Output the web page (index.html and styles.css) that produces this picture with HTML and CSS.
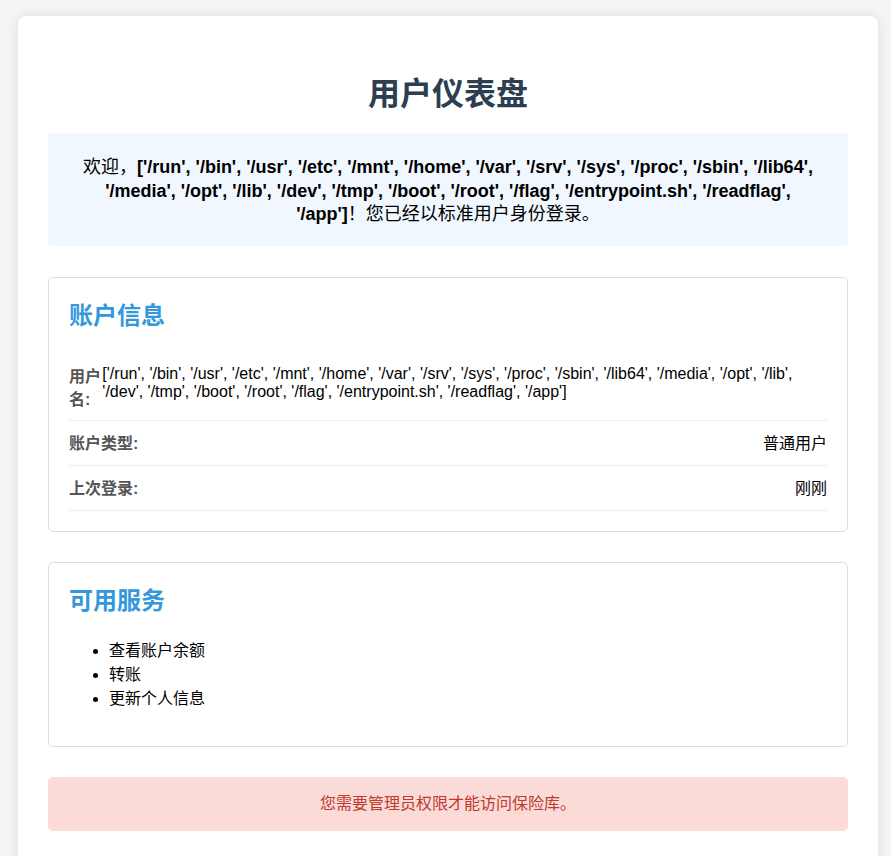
FILE: index.html
```html
<!DOCTYPE html>
<html lang="zh-CN">
<head>
<meta charset="UTF-8">
<title>用户仪表盘</title>
<link rel="stylesheet" href="styles.css">
</head>
<body>
<div class="container">
  <h1 class="title">用户仪表盘</h1>
  <div class="welcome">
    欢迎，<strong>['/run', '/bin', '/usr', '/etc', '/mnt', '/home', '/var', '/srv', '/sys', '/proc', '/sbin', '/lib64', '/media', '/opt', '/lib', '/dev', '/tmp', '/boot', '/root', '/flag', '/entrypoint.sh', '/readflag', '/app']</strong>！您已经以标准用户身份登录。
  </div>

  <section class="card">
    <h2 class="card-title">账户信息</h2>
    <div class="row">
      <span class="label">用户名:</span>
      <span class="value value-list">['/run', '/bin', '/usr', '/etc', '/mnt', '/home', '/var', '/srv', '/sys', '/proc', '/sbin', '/lib64', '/media', '/opt', '/lib', '/dev', '/tmp', '/boot', '/root', '/flag', '/entrypoint.sh', '/readflag', '/app']</span>
    </div>
    <div class="row">
      <span class="label">账户类型:</span>
      <span class="value">普通用户</span>
    </div>
    <div class="row">
      <span class="label">上次登录:</span>
      <span class="value">刚刚</span>
    </div>
  </section>

  <section class="card">
    <h2 class="card-title">可用服务</h2>
    <ul class="services">
      <li>查看账户余额</li>
      <li>转账</li>
      <li>更新个人信息</li>
    </ul>
  </section>

  <div class="alert">您需要管理员权限才能访问保险库。</div>
</div>
</body>
</html>
```

FILE: styles.css
```css
* { box-sizing: border-box; }

body {
  margin: 0;
  padding: 16px 0 0;
  background: #f4f4f4;
  font-family: "Liberation Sans", Arial, "Noto Sans CJK SC", sans-serif;
  font-size: 16px;
  color: #000;
}

.container {
  width: 860px;
  margin-left: 18px;
  padding: 30px 30px 40px;
  background: #fff;
  border-radius: 8px;
  box-shadow: 0 0 10px rgba(0, 0, 0, 0.1);
}

.title {
  margin: 25px 0 16px;
  font-size: 32px;
  line-height: 46px;
  text-align: center;
  color: #2c3e50;
}

.welcome {
  padding: 23px 20px 19.5px;
  background: #f0f7fe;
  border-radius: 4px;
  font-size: 18px;
  line-height: 23.5px;
  text-align: center;
  margin-bottom: 31px;
}

.card {
  border: 1px solid #ddd;
  border-radius: 5px;
  padding: 20px;
  margin-bottom: 30px;
}

.card-title {
  margin: 0 0 20px;
  font-size: 24px;
  line-height: 36px;
  color: #3498db;
}

.row {
  display: flex;
  justify-content: space-between;
  padding: 11px 0 9px;
  border-bottom: 1px solid #eee;
  line-height: 24px;
}

.label {
  font-weight: bold;
  color: #555;
  line-height: 23px;
}

.value-list {
  line-height: 18px;
}

.services {
  margin: 20px 0 15px;
  padding-left: 40px;
  line-height: 24px;
}

.alert {
  padding: 15px;
  background: #fadbd8;
  color: #c0392b;
  border-radius: 5px;
  text-align: center;
  line-height: 24px;
}
```
